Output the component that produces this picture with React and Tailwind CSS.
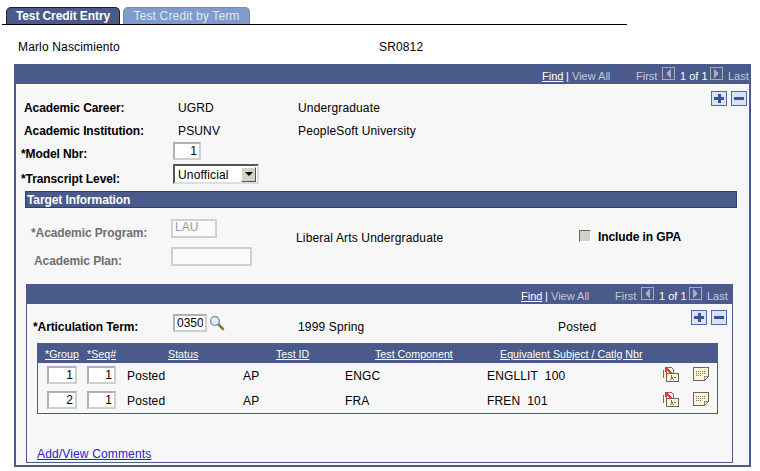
import React from "react";

const NAVY = "#4a5a8a";

function PagerArrow({ dir }) {
  return (
    <svg width="14" height="14" viewBox="0 0 14 14" shapeRendering="crispEdges" className="block">
      <rect x="0.5" y="0.5" width="12" height="12" fill={NAVY} stroke="#a9aeb9" />
      {dir === "left" ? (
        <path d="M9 2v9H8v-1H7V9H6V8H5V5h1V4h1V3h1V2z" fill="#a9aeb9" />
      ) : (
        <path d="M4 2v9h1v-1h1V9h1V8h1V5H7V4H6V3H5V2z" fill="#a9aeb9" />
      )}
    </svg>
  );
}

function ScrollBar({ className }) {
  return (
    <div className={`h-5 shrink-0 bg-[#4a5a8a] flex items-start pt-[6px] text-[11px] leading-[12px] tracking-normal text-[#c5cada] ${className}`}>
      <span className="w-[24px] text-white underline">Find</span>
      <span className="w-[6px] text-white">|</span>
      <span className="w-[64px]">View All</span>
      <span className="w-[26px]">First</span>
      <span className="w-[18px] -mt-[3px]"><PagerArrow dir="left" /></span>
      <span className="w-[30px] text-white">1 of 1</span>
      <span className="w-[18px] -mt-[3px]"><PagerArrow dir="right" /></span>
      <span>Last</span>
    </div>
  );
}

function PM({ type }) {
  return (
    <svg width="16" height="15" viewBox="0 0 16 15" shapeRendering="crispEdges" className="block">
      <rect x="0.5" y="0.5" width="15" height="14" fill="#d9e3f8" stroke="#5266ae" />
      <rect x="3" y="6" width="10" height="3" fill="#3f5296" />
      {type === "plus" && <rect x="6.5" y="3" width="3" height="9" fill="#3f5296" />}
    </svg>
  );
}

function Field({ value = "", w, h = 18, disabled, align = "right" }) {
  return (
    <input
      readOnly
      value={value}
      style={{ width: w, height: h }}
      className={`block shrink-0 border-2 px-[2px] text-[12px] tracking-normal outline-none ${
        align === "right" ? "text-right" : "text-left"
      } ${
        disabled
          ? "text-[#9a9a9a] border-[#d0d0d0] bg-[#fbfbfb] pb-[3px]"
          : "text-black bg-white border-t-[#b0b0b0] border-l-[#b0b0b0] border-r-[#cfcfcf] border-b-[#cfcfcf]"
      }`}
    />
  );
}

function Magnifier() {
  return (
    <svg width="16" height="16" viewBox="0 0 16 16" className="block">
      <path d="M9.5 9.5l4.5 4.5" stroke="#8a7a3a" strokeWidth="2.6" strokeLinecap="round" />
      <circle cx="6" cy="6" r="4.4" fill="#e3eff8" stroke="#6b8ca6" strokeWidth="1.3" />
      <path d="M3.5 6a2.5 2.5 0 0 1 2.5-2.5" fill="none" stroke="#fff" strokeWidth="1.2" />
    </svg>
  );
}

function TransferIcon() {
  return (
    <svg width="16" height="16" viewBox="0 0 16 16" shapeRendering="crispEdges" className="block">
      <path d="M0.5 3.5v8h3M5.5 1.5h3l2 2v3" fill="none" stroke="#6b6b6b" />
      <path d="M2 4h8v4H4v4H1V4z" fill="#fbf3cf" />
      <rect x="3.5" y="7.5" width="12" height="8" fill="#fdf5d2" stroke="#666" />
      <path d="M8 9h1v2h1v2h1v1h-1v-1H8v1H7v-1h1v-2zM11 11h2v1h-2z" fill="#77736a" />
      <path d="M2 1h4v1H5v1h1v1h1v1h1v1h1v1H8v1H7V7H6V6H5V5H4v2H3V6H2z" fill="#e0383e" />
    </svg>
  );
}

function NoteIcon() {
  return (
    <svg width="16" height="14" viewBox="0 0 16 14" shapeRendering="crispEdges" className="block">
      <path d="M0.5 0.5h15v9l-4 4h-11z" fill="#fdf5d2" stroke="#666" />
      <path d="M11 13v-4h4v1h-3v3z" fill="#8a8a8a" />
      <path d="M3 4h1v1H3zM5 4h1v1H5zM7 4h1v1H7zM9 4h1v1H9zM11 4h1v1h-1zM3 6h1v1H3zM5 6h1v1H5zM7 6h1v1H7zM9 6h1v1H9zM11 6h1v1h-1zM3 8h1v1H3zM5 8h1v1H5zM7 8h1v1H7z" fill="#77736a" />
    </svg>
  );
}

function GridRow({ g, s, sub, comp }) {
  return (
    <div className="flex items-start h-[18px]">
      <div className="ml-[9px]"><Field value={g} w={30} /></div>
      <div className="ml-[10px]"><Field value={s} w={29} /></div>
      <span className="ml-[11px] w-[116px] pt-[4px]">Posted</span>
      <span className="w-[102px] pt-[4px]">{comp[0]}</span>
      <span className="w-[142px] pt-[4px]">{comp[1]}</span>
      <span className="w-[176px] pt-[4px] whitespace-pre">{sub}</span>
      <TransferIcon />
      <span className="ml-[14px] pt-[1px]"><NoteIcon /></span>
    </div>
  );
}

export default function App() {
  return (
    <div className="w-[760px] h-[471px] bg-white overflow-hidden text-black text-[12px] leading-[12px] tracking-[0.15px] font-['Liberation_Sans',sans-serif]">
      {/* tabs */}
      <div className="ml-[2px] w-[625px] h-[25px] pt-[7px] pl-[4px] flex gap-[3px] border-b border-black">
        <div className="w-[114px] h-[17px] bg-[#4a5a8a] rounded-t-[5px] border-t border-x border-[#222] text-white font-bold tracking-[-0.1px] flex items-center justify-center">
          Test Credit Entry
        </div>
        <div className="w-[127px] h-[17px] bg-[#7d9bcb] rounded-t-[5px] border-t border-x border-[#8a8a8a] text-[#e2e8f2] flex items-center justify-center">
          Test Credit by Term
        </div>
      </div>

      <div className="ml-[18px] mt-[16px] h-[12px] flex items-center">
        <span className="w-[361px]">Marlo Nascimiento</span>
        <span>SR0812</span>
      </div>

      {/* main panel */}
      <div className="ml-[14px] mt-[11px] w-[737px] h-[403px] bg-[#f7f7f7] border-x-2 border-b-2 border-[#4a5a8a] flex flex-col">
        <ScrollBar className="pl-[526px]" />

        <div className="h-[7px] flex justify-end gap-[4px] pr-[2px] pt-[7px]">
          <PM type="plus" />
          <PM type="minus" />
        </div>

        <div className="mt-[11px] flex items-center h-[12px] ml-[8px]">
          <span className="w-[154px] font-bold tracking-[-0.1px]">Academic Career:</span>
          <span className="w-[120px]">UGRD</span>
          <span>Undergraduate</span>
        </div>
        <div className="mt-[11px] flex items-center h-[12px] ml-[8px]">
          <span className="w-[154px] font-bold tracking-[-0.1px]">Academic Institution:</span>
          <span className="w-[120px]">PSUNV</span>
          <span>PeopleSoft University</span>
        </div>
        <div className="mt-[5px] flex items-start h-[18px] ml-[5px]">
          <span className="w-[152px] pt-[6px] font-bold tracking-[-0.1px]">*Model Nbr:</span>
          <Field value="1" w={28} />
        </div>
        <div className="mt-[4px] flex items-start h-[20px] ml-[5px]">
          <span className="w-[152px] pt-[9px] font-bold tracking-[-0.1px]">*Transcript Level:</span>
          <div className="w-[86px] h-[20px] bg-white border-2 border-t-[#555] border-l-[#555] border-r-[#ddd] border-b-[#ddd] flex items-center pl-[3px] justify-between">
            <span className="pt-[1px]">Unofficial</span>
            <span className="w-[15px] h-[15px] mr-[1px] bg-[#d4d0c8] border border-t-white border-l-white border-r-[#555] border-b-[#555] flex items-center justify-center">
              <span className="w-0 h-0 border-x-[4px] border-x-transparent border-t-[4px] border-t-black" />
            </span>
          </div>
        </div>

        <div className="mt-[7px] ml-[9px] w-[712px] h-[17px] shrink-0 bg-[#4a5a8a] border border-[#2f3e70] text-white font-bold tracking-[-0.1px] flex items-center pl-[1px]">
          Target Information
        </div>

        <div className="mt-[11px] flex ml-[15px] text-[#6f6f6f] h-[19px] items-start">
          <span className="w-[140px] pt-[8px] font-bold tracking-[-0.1px]">*Academic Program:</span>
          <Field value="LAU" w={46} h={19} disabled align="left" />
          <span className="ml-[79px] w-[283px] pt-[13px] text-black">Liberal Arts Undergraduate</span>
          <span className="mt-[11px] w-[12px] h-[12px] bg-[#d4d0c8] border border-t-[#666] border-l-[#666] border-r-white border-b-white" />
          <span className="ml-[7px] pt-[12px] font-bold tracking-[-0.1px] text-black">Include in GPA</span>
        </div>
        <div className="mt-[9px] flex ml-[18px] text-[#6f6f6f] h-[19px] items-start">
          <span className="w-[137px] pt-[8px] font-bold tracking-[-0.1px]">Academic Plan:</span>
          <Field w={81} h={19} disabled align="left" />
        </div>

        {/* inner panel */}
        <div className="mt-[18px] ml-[10px] w-[707px] h-[179px] shrink-0 border-x border-b border-[#4a5a8a] flex flex-col">
          <ScrollBar className="pl-[494px]" />
          <div className="h-[6px] flex justify-end gap-[4px] pr-[5px] pt-[6px]">
            <PM type="plus" />
            <PM type="minus" />
          </div>
          <div className="mt-[4px] ml-[6px] flex items-start h-[18px]">
            <span className="w-[140px] pt-[7px] font-bold tracking-[-0.1px]">*Articulation Term:</span>
            <Field value="0350" w={34} align="left" />
            <span className="ml-[2px] mt-[1px]"><Magnifier /></span>
            <span className="ml-[73px] w-[260px] pt-[7px]">1999 Spring</span>
            <span className="pt-[7px]">Posted</span>
          </div>

          <div className="mt-[11px] ml-[10px] w-[681px] h-[71px] shrink-0 border border-[#4a5a8a]">
            <div className="h-[19px] bg-[#4a5a8a] text-white text-[10.7px] tracking-normal flex items-center [&>span]:underline">
              <span className="ml-[7px] w-[42px]">*Group</span>
              <span className="w-[81px]">*Seq#</span>
              <span className="w-[108px]">Status</span>
              <span className="w-[99px]">Test ID</span>
              <span className="w-[125px]">Test Component</span>
              <span>Equivalent Subject / Catlg Nbr</span>
            </div>
            <div className="pt-[3px] flex flex-col gap-[7px]">
              <GridRow g="1" s="1" comp={["AP", "ENGC"]} sub="ENGLLIT  100" />
              <GridRow g="2" s="1" comp={["AP", "FRA"]} sub="FREN  101" />
            </div>
          </div>

          <a className="mt-[34px] ml-[10px] text-[#2222cc] underline">Add/View Comments</a>
        </div>
      </div>
    </div>
  );
}
